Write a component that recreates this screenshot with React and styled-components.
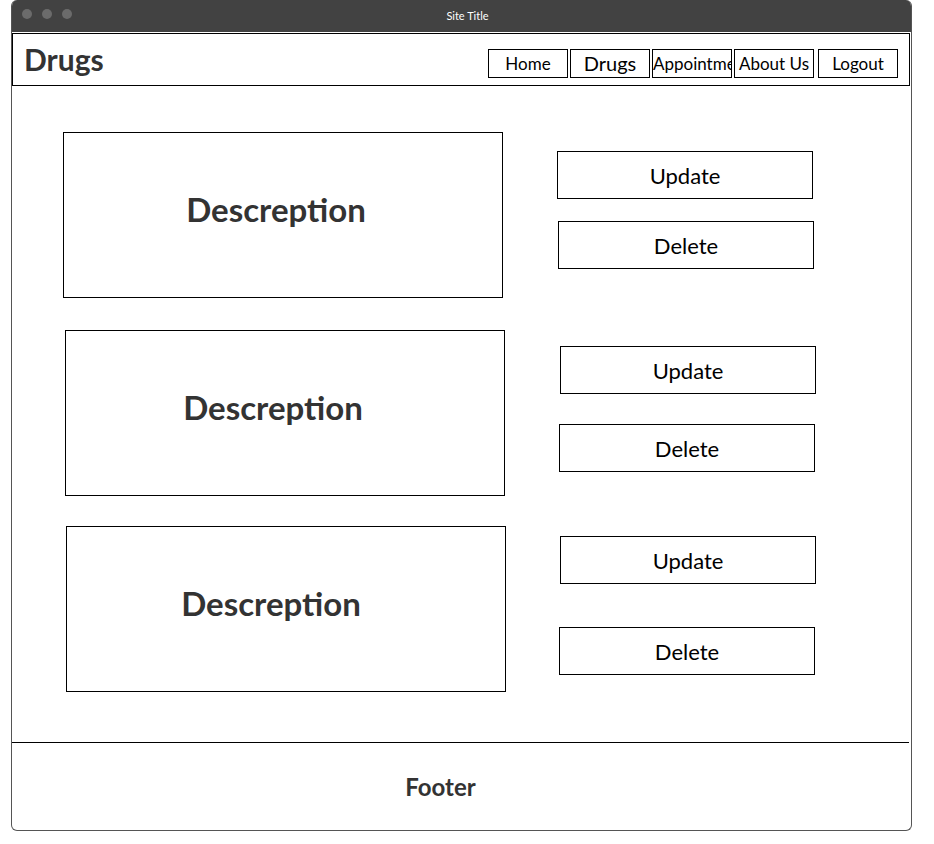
import React from 'react'
import styled, { createGlobalStyle } from 'styled-components'

const GlobalStyle = createGlobalStyle`
  html, body {
    margin: 0;
    padding: 0;
    background: #fff;
    font-family: Lato, "Open Sans", "Noto Sans", sans-serif;
  }
`

const Window = styled.div`
  box-sizing: border-box;
  width: 901px;
  height: 831px;
  margin-left: 11px;
  border: 1px solid #555;
  border-top: none;
  border-radius: 6px;
  overflow: hidden;
  display: flex;
  flex-direction: column;
  background: #fff;
`

const TitleBar = styled.div`
  position: relative;
  height: 32px;
  flex-shrink: 0;
  background: #424242;
  display: flex;
  align-items: center;
  justify-content: center;
  margin: 0 -1px;
`

const Dots = styled.div`
  position: absolute;
  left: 11px;
  top: 9px;
  display: flex;
  gap: 10px;
`

const Dot = styled.span`
  width: 10px;
  height: 10px;
  border-radius: 50%;
  background: #6b6b6b;
`

const WindowTitle = styled.span`
  color: #fff;
  font-size: 11px;
  margin-left: 12px;
  margin-bottom: 1px;
`

const Header = styled.header`
  box-sizing: border-box;
  width: 898px;
  height: 53px;
  margin-top: 1px;
  border: 1px solid #000;
  display: flex;
  align-items: flex-end;
  justify-content: space-between;
  padding: 0 11px 7px 11px;
  flex-shrink: 0;
`

const Brand = styled.h1`
  margin: 0 0 0 0;
  align-self: center;
  padding-top: 6px;
  font-size: 30px;
  font-weight: 700;
  color: #333;
`

const Nav = styled.nav`
  display: flex;
  gap: 2px;
`

const NavItem = styled.div`
  box-sizing: border-box;
  width: 80px;
  height: 29px;
  border: 1px solid #000;
  font-size: ${p => p.$big ? '20px' : '17px'};
  line-height: 27px;
  text-align: center;
  white-space: nowrap;
  overflow: hidden;
  color: #000;
  margin-left: ${p => p.$gap || 0}px;
`

const Main = styled.main`
  flex: 1;
`

const Row = styled.section`
  display: flex;
  align-items: flex-start;
  margin-top: ${p => p.$top}px;
  padding-left: ${p => p.$left}px;
`

const Desc = styled.div`
  box-sizing: border-box;
  width: 440px;
  height: 166px;
  border: 1px solid #000;
  display: flex;
  align-items: center;
  justify-content: center;
  padding-right: ${p => p.$shift}px;
  padding-bottom: 12px;
  font-size: 33px;
  font-weight: 700;
  color: #333;
`

const Actions = styled.div`
  display: flex;
  flex-direction: column;
  align-items: flex-start;
`

const ActionButton = styled.div`
  box-sizing: border-box;
  width: 256px;
  height: 48px;
  border: 1px solid #000;
  display: flex;
  align-items: center;
  justify-content: center;
  font-size: 22px;
  color: #000;
  margin-left: ${p => p.$x}px;
  margin-top: ${p => p.$y}px;
`

const Footer = styled.footer`
  box-sizing: border-box;
  height: 88px;
  flex-shrink: 0;
  margin-right: 2px;
  border-top: 1px solid #000;
  display: flex;
  align-items: center;
  justify-content: center;
  padding-right: 40px;
  font-size: 24px;
  font-weight: 700;
  color: #333;
`

const rows = [
  { top: 46, left: 51, shift: 14, update: [54, 19], del: [55, 22] },
  { top: 32, left: 53, shift: 24, update: [55, 16], del: [54, 30] },
  { top: 30, left: 54, shift: 30, update: [54, 10], del: [53, 43] },
]

export default function App() {
  return (
    <>
      <GlobalStyle />
      <Window>
        <TitleBar>
          <Dots>
            <Dot />
            <Dot />
            <Dot />
          </Dots>
          <WindowTitle>Site Title</WindowTitle>
        </TitleBar>
        <Header>
          <Brand>Drugs</Brand>
          <Nav>
            <NavItem>Home</NavItem>
            <NavItem $big>Drugs</NavItem>
            <NavItem>Appointments</NavItem>
            <NavItem>About Us</NavItem>
            <NavItem $gap={2}>Logout</NavItem>
          </Nav>
        </Header>
        <Main>
          {rows.map((row, i) => (
            <Row key={i} $top={row.top} $left={row.left}>
              <Desc $shift={row.shift}>Descreption</Desc>
              <Actions>
                <ActionButton $x={row.update[0]} $y={row.update[1]}>Update</ActionButton>
                <ActionButton $x={row.del[0]} $y={row.del[1]}>Delete</ActionButton>
              </Actions>
            </Row>
          ))}
        </Main>
        <Footer>Footer</Footer>
      </Window>
    </>
  )
}
